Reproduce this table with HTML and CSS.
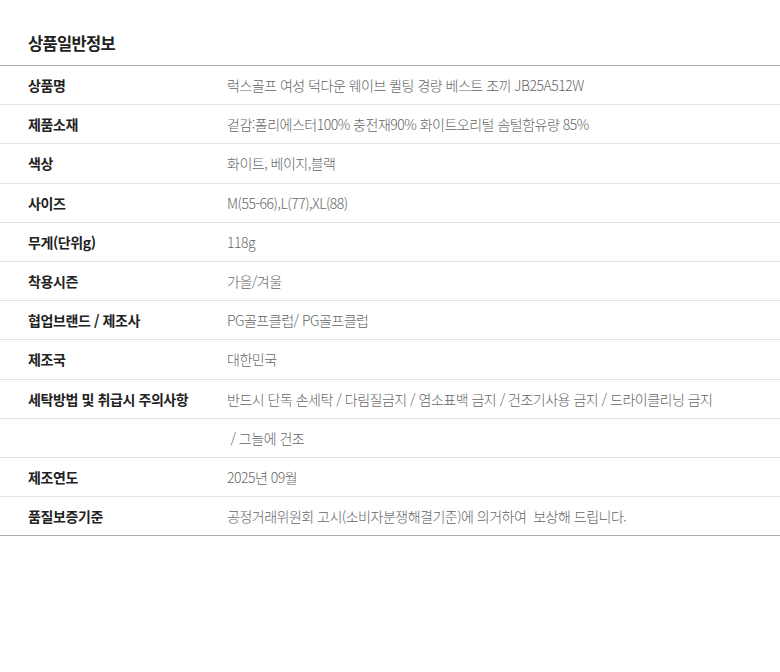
FILE: index.html
```html
<!DOCTYPE html>
<html lang="ko">
<head>
<meta charset="utf-8">
<link rel="stylesheet" href="styles.css">
</head>
<body>
<div class="wrap">
  <h2 class="title">상품일반정보</h2>
  <table class="info">
    <tbody>
      <tr><th>상품명</th><td>럭스골프 여성 덕다운 웨이브 퀼팅 경량 베스트 조끼 JB25A512W</td></tr>
      <tr><th>제품소재</th><td>겉감:폴리에스터100% 충전재90% 화이트오리털 솜털함유량 85%</td></tr>
      <tr><th>색상</th><td>화이트, 베이지,블랙</td></tr>
      <tr><th>사이즈</th><td>M(55-66),L(77),XL(88)</td></tr>
      <tr><th>무게(단위g)</th><td>118g</td></tr>
      <tr><th>착용시즌</th><td>가을/겨울</td></tr>
      <tr><th>협업브랜드 / 제조사</th><td>PG골프클럽/ PG골프클럽</td></tr>
      <tr><th>제조국</th><td>대한민국</td></tr>
      <tr><th>세탁방법 및 취급시 주의사항</th><td>반드시 단독 손세탁 / 다림질금지 / 염소표백 금지 / 건조기사용 금지 / 드라이클리닝 금지</td></tr>
      <tr><th></th><td>&nbsp;/ 그늘에 건조</td></tr>
      <tr><th>제조연도</th><td>2025년 09월</td></tr>
      <tr><th>품질보증기준</th><td>공정거래위원회 고시(소비자분쟁해결기준)에 의거하여&nbsp; 보상해 드립니다.</td></tr>
    </tbody>
  </table>
</div>
</body>
</html>
```

FILE: styles.css
```css
html, body {
  margin: 0;
  padding: 0;
  background: #fff;
}
body {
  font-family: "Noto Sans CJK KR", "Noto Sans", sans-serif;
  color: #222;
}
.wrap {
  width: 780px;
}
.title {
  margin: 0;
  padding: 31px 28px 0;
  height: 34px;
  font-size: 16.5px;
  line-height: 24px;
  font-weight: 700;
  color: #222;
  letter-spacing: -0.7px;
}
.info {
  width: 100%;
  border-collapse: collapse;
  border-top: 1px solid #aaa;
  border-bottom: 1px solid #aaa;
}
.info th,
.info td {
  height: 38.2px;
  padding: 0;
  border-bottom: 1px solid #e3e3e3;
  font-size: 14px;
  line-height: 20px;
  text-align: left;
  vertical-align: middle;
  letter-spacing: -0.4px;
}
.info tr:last-child th,
.info tr:last-child td {
  border-bottom: 0;
}
.info th {
  width: 199px;
  padding-left: 28px;
  font-weight: 700;
  color: #222;
}
.info td {
  font-weight: 300;
  color: #666;
  letter-spacing: -0.5px;
}
```
